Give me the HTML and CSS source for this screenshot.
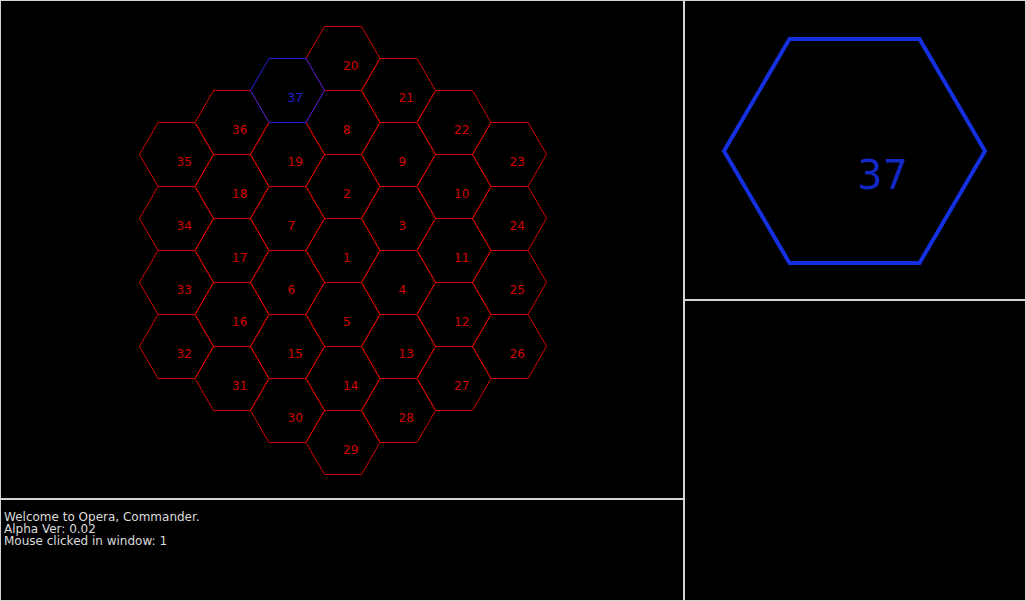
FILE: index.html
```html
<!DOCTYPE html>
<html>
<head>
<meta charset="utf-8">
<title>Opera</title>
<link rel="stylesheet" href="styles.css">
</head>
<body>
<div class="screen">

<div class="left">
  <div class="panel map">
    <svg class="grid" width="682" height="497" viewBox="1 1 682 497">
      <defs>
        <polygon id="hex" points="-37,0 -18.5,-32 18.5,-32 37,0 18.5,32 -18.5,32"/>
      </defs>
      <g transform="translate(0.5 0.5)">
        <g class="red">
          <!-- center -->
          <use href="#hex" x="342.5" y="250"/>
          <!-- ring 1 -->
          <use href="#hex" x="342.5" y="186"/>
          <use href="#hex" x="398" y="218"/>
          <use href="#hex" x="398" y="282"/>
          <use href="#hex" x="342.5" y="314"/>
          <use href="#hex" x="287" y="282"/>
          <use href="#hex" x="287" y="218"/>
          <!-- ring 2 -->
          <use href="#hex" x="342.5" y="122"/>
          <use href="#hex" x="398" y="154"/>
          <use href="#hex" x="453.5" y="186"/>
          <use href="#hex" x="453.5" y="250"/>
          <use href="#hex" x="453.5" y="314"/>
          <use href="#hex" x="398" y="346"/>
          <use href="#hex" x="342.5" y="378"/>
          <use href="#hex" x="287" y="346"/>
          <use href="#hex" x="231.5" y="314"/>
          <use href="#hex" x="231.5" y="250"/>
          <use href="#hex" x="231.5" y="186"/>
          <use href="#hex" x="287" y="154"/>
          <!-- ring 3 -->
          <use href="#hex" x="342.5" y="58"/>
          <use href="#hex" x="398" y="90"/>
          <use href="#hex" x="453.5" y="122"/>
          <use href="#hex" x="509" y="154"/>
          <use href="#hex" x="509" y="218"/>
          <use href="#hex" x="509" y="282"/>
          <use href="#hex" x="509" y="346"/>
          <use href="#hex" x="453.5" y="378"/>
          <use href="#hex" x="398" y="410"/>
          <use href="#hex" x="342.5" y="442"/>
          <use href="#hex" x="287" y="410"/>
          <use href="#hex" x="231.5" y="378"/>
          <use href="#hex" x="176" y="346"/>
          <use href="#hex" x="176" y="282"/>
          <use href="#hex" x="176" y="218"/>
          <use href="#hex" x="176" y="154"/>
          <use href="#hex" x="231.5" y="122"/>

          <text x="342.5" y="261">1</text>
          <text x="342.5" y="197">2</text>
          <text x="398" y="229">3</text>
          <text x="398" y="293">4</text>
          <text x="342.5" y="325">5</text>
          <text x="287" y="293">6</text>
          <text x="287" y="229">7</text>
          <text x="342.5" y="133">8</text>
          <text x="398" y="165">9</text>
          <text x="453.5" y="197">10</text>
          <text x="453.5" y="261">11</text>
          <text x="453.5" y="325">12</text>
          <text x="398" y="357">13</text>
          <text x="342.5" y="389">14</text>
          <text x="287" y="357">15</text>
          <text x="231.5" y="325">16</text>
          <text x="231.5" y="261">17</text>
          <text x="231.5" y="197">18</text>
          <text x="287" y="165">19</text>
          <text x="342.5" y="69">20</text>
          <text x="398" y="101">21</text>
          <text x="453.5" y="133">22</text>
          <text x="509" y="165">23</text>
          <text x="509" y="229">24</text>
          <text x="509" y="293">25</text>
          <text x="509" y="357">26</text>
          <text x="453.5" y="389">27</text>
          <text x="398" y="421">28</text>
          <text x="342.5" y="453">29</text>
          <text x="287" y="421">30</text>
          <text x="231.5" y="389">31</text>
          <text x="176" y="357">32</text>
          <text x="176" y="293">33</text>
          <text x="176" y="229">34</text>
          <text x="176" y="165">35</text>
          <text x="231.5" y="133">36</text>
        </g>
        <!-- selected hex drawn last so its edges sit on top -->
        <g class="blue">
          <use href="#hex" x="287" y="90"/>
          <text x="287" y="101">37</text>
        </g>
      </g>
    </svg>
  </div>
  <div class="panel log">
    <div>Welcome to Opera, Commander.</div>
    <div>Alpha Ver: 0.02</div>
    <div>Mouse clicked in window: 1</div>
  </div>
</div>

<div class="right">
  <div class="panel detail">
    <svg class="zoomhex" width="340" height="298" viewBox="685 1 340 298">
      <polygon points="724,151 789.5,39 919.5,39 985,151 919.5,263 789.5,263"/>
      <text x="857" y="189">37</text>
    </svg>
  </div>
  <div class="panel info"></div>
</div>

</div>
</body>
</html>
```

FILE: styles.css
```css
* {
   box-sizing: border-box;
}

html, body {
   margin: 0;
   padding: 0;
   background-color: black;
}

body {
   font-family: "DejaVu Sans", sans-serif;
   font-size: 12px;
   color: #dcdcdc;
}

.screen {
   display: grid;
   grid-template-columns: 684px 342px;
   width: 1026px;
   height: 601px;
}

.left, .right {
   display: flex;
   flex-direction: column;
}

.panel {
   border: 1px solid #d4d4d4;
   background-color: black;
   overflow: hidden;
}

.map {
   height: 499px;
}

.log {
   height: 102px;
   padding: 11px 3px 0 3px;
   line-height: 12px;
}

.detail {
   height: 300px;
}

.info {
   height: 301px;
}

svg {
   display: block;
}

.grid text {
   font-family: "DejaVu Sans", sans-serif;
   font-size: 12px;
   stroke: none;
}

.red {
   fill: none;
   stroke: #d40000;
   stroke-width: 1;
}

.red text {
   fill: #d40000;
}

.blue {
   fill: none;
   stroke: #2222dc;
   stroke-width: 1;
}

.blue text {
   fill: #2222dc;
}

.zoomhex polygon {
   fill: none;
   stroke: #1430e0;
   stroke-width: 4;
   stroke-linejoin: miter;
}

.zoomhex text {
   font-family: "DejaVu Sans", sans-serif;
   font-size: 40px;
   fill: #1228c4;
   filter: blur(0.6px);
}
```
